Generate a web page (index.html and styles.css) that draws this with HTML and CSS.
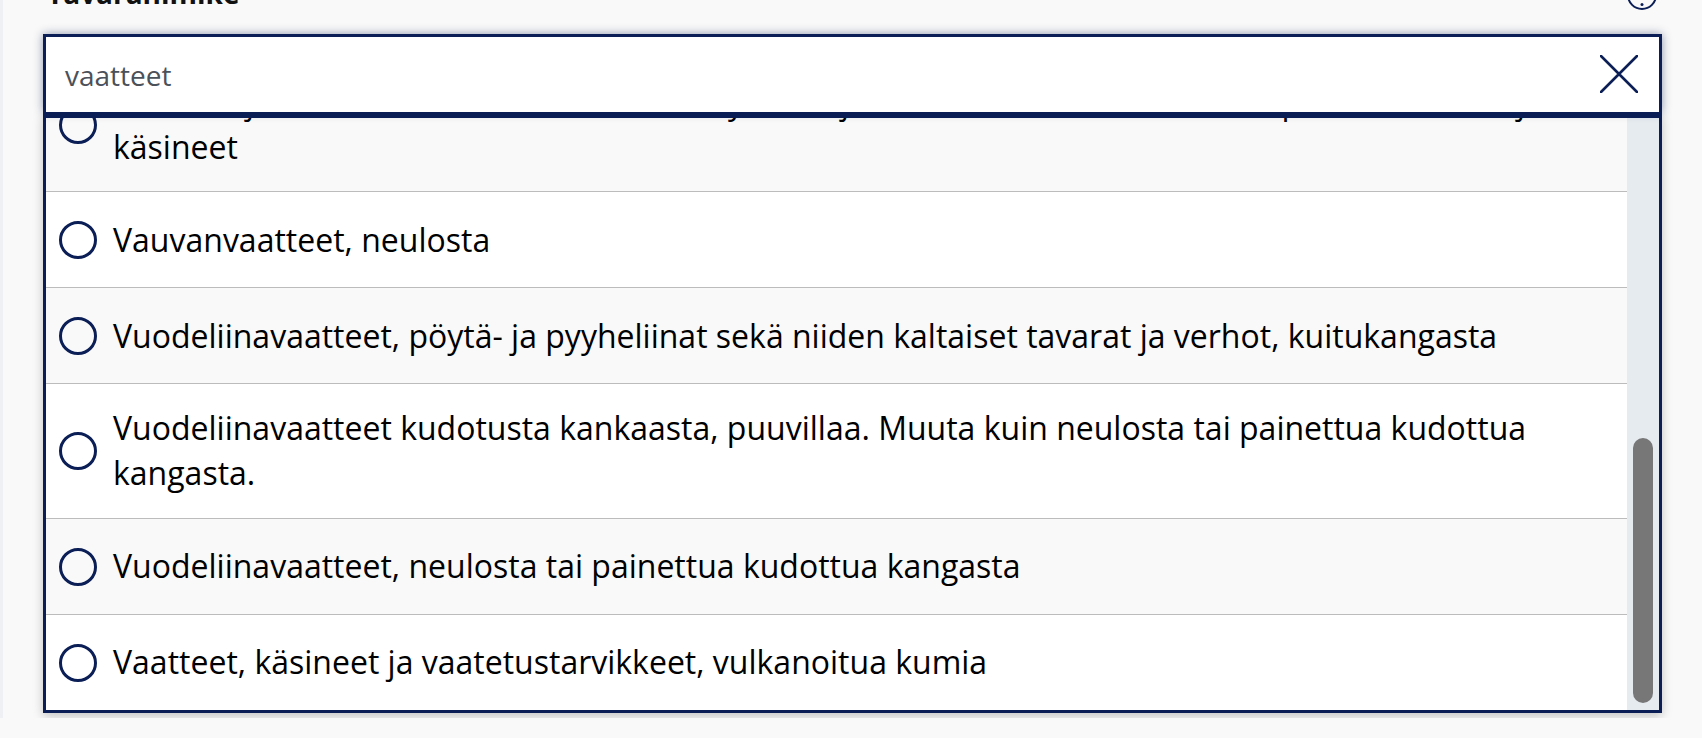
FILE: index.html
```html
<!DOCTYPE html>
<html lang="fi">
<head>
<meta charset="utf-8">
<title>Tavaranimike</title>
<link rel="stylesheet" href="styles.css">
</head>
<body>
<div class="page">
  <div class="field">
    <div class="label-row">
      <span class="label">Tavaranimike</span>
      <svg class="help" width="30" height="30" viewBox="0 0 30 30" aria-hidden="true">
        <circle cx="15" cy="15" r="14" fill="none" stroke="#0b1f56" stroke-width="2"/>
        <path d="M11 11.5a4 4 0 1 1 5.5 3.7c-1 .5-1.5 1.2-1.5 2.3v1.2" fill="none" stroke="#0b1f56" stroke-width="2" stroke-linecap="round"/>
        <circle cx="15" cy="24.5" r="1.5" fill="#0b1f56"/>
      </svg>
    </div>
    <div class="combo">
      <div class="input-box">
        <span class="input-text">vaatteet</span>
        <svg class="clear" width="38" height="38" viewBox="0 0 38 38" aria-hidden="true">
          <path d="M1 1L37 37M37 1L1 37" stroke="#0b1f56" stroke-width="2.6" stroke-linecap="round"/>
        </svg>
      </div>
      <div class="listbox">
        <div class="options">
          <div class="option alt"><span class="radio"></span><span class="opt-text">Vaatteet ja vaatetustarvikkeet, muovia; myös suojavaatteet, esiliinat, kintaat, lapaset, rukkaset ja käsineet</span></div>
          <div class="option"><span class="radio"></span><span class="opt-text">Vauvanvaatteet, neulosta</span></div>
          <div class="option alt"><span class="radio"></span><span class="opt-text">Vuodeliinavaatteet, pöytä- ja pyyheliinat sekä niiden kaltaiset tavarat ja verhot, kuitukangasta</span></div>
          <div class="option"><span class="radio"></span><span class="opt-text">Vuodeliinavaatteet kudotusta kankaasta, puuvillaa. Muuta kuin neulosta tai painettua kudottua kangasta.</span></div>
          <div class="option alt"><span class="radio"></span><span class="opt-text">Vuodeliinavaatteet, neulosta tai painettua kudottua kangasta</span></div>
          <div class="option last"><span class="radio"></span><span class="opt-text">Vaatteet, käsineet ja vaatetustarvikkeet, vulkanoitua kumia</span></div>
        </div>
        <div class="scrollbar"><div class="thumb"></div></div>
      </div>
    </div>
  </div>
</div>
</body>
</html>
```

FILE: styles.css
```css
html, body {
  margin: 0;
  padding: 0;
}
body {
  background: #f9f9f9;
  font-family: "Open Sans", "Noto Sans", "Liberation Sans", sans-serif;
  color: #000;
  overflow: hidden;
}
.page {
  height: 738px;
  box-sizing: border-box;
  border-left: 3px solid #eef0f4;
  padding-left: 40px;
}
.field {
  width: 1619px;
  margin-top: -20px;
}
.label-row {
  display: flex;
  justify-content: space-between;
  align-items: flex-start;
  height: 30px;
}
.label {
  font-size: 28px;
  font-weight: 700;
  line-height: 26px;
  color: #111;
  padding-left: 4px;
}
.help {
  display: block;
  margin-right: 5px;
}
.combo {
  margin-top: 24px;
}
.input-box {
  height: 78px;
  box-sizing: border-box;
  border: 3px solid #0b1f56;
  border-bottom: 0;
  background: #fff;
  display: flex;
  align-items: center;
  justify-content: space-between;
  padding: 0 21px 0 19px;
  box-shadow: 0 0 9px rgba(11, 31, 86, 0.45);
  position: relative;
  z-index: 1;
}
.input-text {
  font-size: 28px;
  line-height: 38px;
  color: #4b5159;
}
.clear {
  display: block;
  margin-top: -1px;
}
.listbox {
  display: flex;
  height: 601px;
  box-sizing: border-box;
  border: 3px solid #0b1f56;
  border-top-width: 6px;
  background: #fff;
  box-shadow: 0 3px 10px rgba(0, 0, 0, 0.22);
}
.options {
  flex: 1;
  display: flex;
  flex-direction: column;
  justify-content: flex-end;
  overflow: hidden;
}
.option {
  flex-shrink: 0;
  box-sizing: border-box;
  min-height: 96px;
  display: flex;
  align-items: center;
  gap: 16px;
  padding: 22px 16px 22px 13px;
  border-bottom: 1px solid #bcbcbc;
  font-size: 32px;
  line-height: 1.4;
  background: #fff;
}
.option.last {
  border-bottom: 0;
  min-height: 95px;
}
.option.alt {
  background: #f9f9f9;
}
.radio {
  flex-shrink: 0;
  width: 38px;
  height: 38px;
  box-sizing: border-box;
  border: 3px solid #0b1f56;
  border-radius: 50%;
}
.scrollbar {
  width: 32px;
  flex-shrink: 0;
  box-sizing: border-box;
  background: #e6ebf0;
  display: flex;
  flex-direction: column;
  justify-content: flex-end;
  padding: 0 6px 7px;
}
.thumb {
  height: 265px;
  background: #777;
  border-radius: 10px;
}
```
